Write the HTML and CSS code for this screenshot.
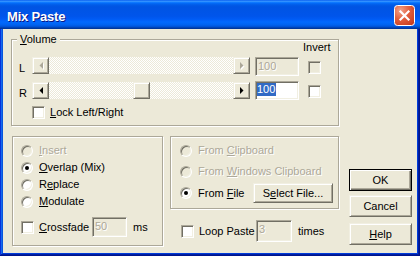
FILE: index.html
```html
<!DOCTYPE html>
<html>
<head>
<meta charset="utf-8">
<link rel="stylesheet" href="styles.css">
</head>
<body>
<div class="window">
  <div class="titlebar">
    <span class="title">Mix Paste</span>
    <span class="close">
      <svg width="21" height="21" viewBox="0 0 21 21">
        <defs>
          <radialGradient id="cg" cx="0.3" cy="0.25" r="0.95">
            <stop offset="0" stop-color="#F2A28A"/>
            <stop offset="0.45" stop-color="#E2603F"/>
            <stop offset="1" stop-color="#C2381A"/>
          </radialGradient>
        </defs>
        <rect x="0.5" y="0.5" width="20" height="20" rx="3" fill="url(#cg)" stroke="#fff"/>
        <path d="M6.5 6.5L14.5 14.5M14.5 6.5L6.5 14.5" stroke="#fff" stroke-width="2.2" stroke-linecap="square"/>
      </svg>
    </span>
  </div>
  <div class="client">
    <div class="main">
      <div class="group volume">
        <div class="legend"><u>V</u>olume</div>
        <div class="vol-grid">
          <span class="invert-label">Invert</span>

          <span class="ch-label l">L</span>
          <div class="scroll disabled">
            <span class="arrow"><svg width="5" height="8" viewBox="0 0 5 8"><polygon points="5,1 5,8 1.5,4.5" fill="#fff"/><polygon points="4,0 4,7 0.5,3.5" fill="#ACA899"/></svg></span>
            <span class="track"></span>
            <span class="arrow"><svg width="5" height="8" viewBox="0 0 5 8"><polygon points="1,1 1,8 4.5,4.5" fill="#fff"/><polygon points="0,0 0,7 3.5,3.5" fill="#ACA899"/></svg></span>
          </div>
          <span class="edit disabled">100</span>
          <span class="check disabled"></span>

          <span class="ch-label r">R</span>
          <div class="scroll r">
            <span class="arrow"><svg width="4" height="7" viewBox="0 0 4 7"><polygon points="4,0 4,7 0.5,3.5" fill="#000"/></svg></span>
            <span class="track"><span class="thumb" style="margin-left:84px"></span></span>
            <span class="arrow"><svg width="4" height="7" viewBox="0 0 4 7"><polygon points="0,0 0,7 3.5,3.5" fill="#000"/></svg></span>
          </div>
          <span class="edit"><span class="sel">100</span></span>
          <span class="check"></span>

          <label class="opt lock"><span class="check"></span><span><u>L</u>ock Left/Right</span></label>
        </div>
      </div>

      <div class="lower">
        <div class="group mode">
          <div class="opt disabled"><span class="radio"></span><span><u>I</u>nsert</span></div>
          <div class="opt"><span class="radio on"></span><span><u>O</u>verlap (Mix)</span></div>
          <div class="opt"><span class="radio"></span><span>R<u>e</u>place</span></div>
          <div class="opt"><span class="radio"></span><span><u>M</u>odulate</span></div>
          <div class="opt xfade">
            <span class="check"></span><span class="xfade-text"><u>C</u>rossfade</span>
            <span class="edit disabled small">50</span>
            <span class="unit">ms</span>
          </div>
        </div>

        <div class="mid">
          <div class="group source">
            <div class="opt disabled"><span class="radio"></span><span>From <u>C</u>lipboard</span></div>
            <div class="opt disabled row2"><span class="radio"></span><span>From <u>W</u>indows Clipboard</span></div>
            <div class="opt row3"><span class="radio on"></span><span>From <u>F</u>ile</span>
              <span class="btn select">S<u>e</u>lect File...</span>
            </div>
          </div>
          <div class="opt loop">
            <span class="check"></span><span class="loop-text">Loop Paste</span>
            <span class="edit disabled times">3</span>
            <span class="unit">times</span>
          </div>
        </div>
      </div>
    </div>

    <div class="buttons">
      <span class="btn default">OK</span>
      <span class="btn cancel">Cancel</span>
      <span class="btn help"><u>H</u>elp</span>
    </div>
  </div>
</div>
</body>
</html>
```

FILE: styles.css
```css
* { box-sizing: border-box; }
html, body { margin: 0; padding: 0; }
body {
  width: 420px;
  height: 256px;
  overflow: hidden;
  font-family: "Liberation Sans", Arial, sans-serif;
  font-size: 11px;
  line-height: 13px;
  color: #000;
}
u { text-decoration-thickness: 1px; text-underline-offset: 1px; }

.window {
  width: 420px;
  height: 256px;
  display: flex;
  flex-direction: column;
  background: #0855DD;
  box-shadow: inset -1px -1px #00138C, inset 1px 1px #0831D9, inset -2px -2px #001EA0,
              inset 2px 2px #166AEE, inset -3px -3px #003BDA, inset 3px 3px #0855DD;
}

.titlebar {
  flex: none;
  height: 29px;
  display: flex;
  align-items: flex-start;
  padding: 0 5px 0 7px;
  background: linear-gradient(to bottom, #0058EE 0%, #3A93FF 4%, #288EFF 6%, #127DFF 8%,
    #036FFC 10%, #0262EE 14%, #0057E5 20%, #0054E3 24%, #0055EB 56%, #005BF5 66%,
    #026AFE 76%, #0062EF 86%, #0052D6 92%, #0040AB 96%, #003092 100%);
}
.title {
  flex: 1;
  margin-top: 9px;
  color: #fff;
  font-weight: bold;
  font-size: 13px;
  line-height: 15px;
  letter-spacing: -0.2px;
  text-shadow: 1px 1px #0A1883;
}
.close { margin-top: 5px; width: 21px; height: 21px; display: block; }
.close svg { display: block; }

.client {
  flex: 1;
  margin: 0 3px 3px;
  background: #ECE9D8;
  display: flex;
  padding: 10px 0 0 8px;
}

.main { width: 328px; flex: none; }

.group {
  border: 1px solid #ACA899;
  box-shadow: inset 1px 1px #fff, 1px 1px #fff;
}
.legend {
  width: fit-content;
  margin: -7px 0 0 -2px;
  padding: 0 3px;
  background: #ECE9D8;
}

.volume { height: 87px; padding: 0 7px 6px 7px; }
.vol-grid {
  display: grid;
  grid-template-columns: 13px 218px 49px 22px;
  grid-template-rows: 16px 24px 25px 13px;
  align-items: start;
  margin-top: -5px;
}
.invert-label { grid-column: 4; margin-left: 4px; white-space: nowrap; }
.ch-label.l { margin-top: 5px; }
.ch-label.r { margin-top: 6px; }
.scroll.r { margin-top: 1px; }
.vol-grid .edit { margin-left: 5px; width: 44px; height: 19px; }
.vol-grid > .check { margin-left: 9px; margin-top: 4px; }
.lock { grid-column: 2 / 5; }

.scroll { display: flex; height: 17px; width: 218px; }
.arrow {
  width: 17px;
  height: 17px;
  flex: none;
  display: flex;
  align-items: center;
  justify-content: center;
  background: #ECE9D8;
  border: 1px solid;
  border-color: #F1EFE2 #716F64 #716F64 #F1EFE2;
  box-shadow: inset 1px 1px #fff, inset -1px -1px #ACA899;
}
.arrow svg { display: block; }
.scroll.disabled .arrow svg { margin: 1px 0 0 1px; }
.track {
  flex: 1;
  display: flex;
  background: repeating-conic-gradient(#fff 0 25%, #ECE9D8 0 50%) 0 0 / 2px 2px;
}
.thumb {
  width: 17px;
  height: 17px;
  background: #ECE9D8;
  border: 1px solid;
  border-color: #F1EFE2 #716F64 #716F64 #F1EFE2;
  box-shadow: inset 1px 1px #fff, inset -1px -1px #ACA899;
}

.edit {
  display: block;
  background: #fff;
  border: 1px solid;
  border-color: #ACA899 #fff #fff #ACA899;
  box-shadow: inset 1px 1px #716F64, inset -1px -1px #F1EFE2;
  padding: 1px 1px 0;
  white-space: nowrap;
}
.edit.disabled { background: #ECE9D8; color: #ACA899; text-shadow: 1px 1px #fff; padding-top: 2px; padding-left: 2px; }
.sel { background: #316AC5; color: #fff; padding-right: 1px; display: inline-block; }

.check {
  width: 13px;
  height: 13px;
  flex: none;
  display: block;
  background: #fff;
  border: 1px solid;
  border-color: #ACA899 #fff #fff #ACA899;
  box-shadow: inset 1px 1px #716F64, inset -1px -1px #F1EFE2;
}
.check.disabled { background: #ECE9D8; }

.radio {
  width: 12px;
  height: 12px;
  flex: none;
  border-radius: 50%;
  background: #fff;
  border: 1px solid;
  border-color: #ACA899 #fff #fff #ACA899;
  box-shadow: inset 1px 1px #716F64, inset -1px -1px #F1EFE2;
  display: flex;
  align-items: center;
  justify-content: center;
}
.radio.on::after {
  content: "";
  width: 4px;
  height: 4px;
  border-radius: 50%;
  background: #000;
}

.opt { display: flex; align-items: center; height: 13px; white-space: nowrap; }
.opt .radio { margin-right: 6px; }
.opt .check { margin-right: 5px; }
.opt.disabled { color: #ACA899; text-shadow: 1px 1px #fff; }
.opt.disabled .radio { background: #ECE9D8; }

.lower { display: flex; margin-top: 10px; }

.mode {
  margin-left: 1px;
  width: 151px;
  height: 110px;
  padding: 7px 0 0 8px;
  display: flex;
  flex-direction: column;
  gap: 4px;
}
.mode .xfade { height: 20px; margin-top: 5px; }
.xfade-text { width: 53px; }
.edit.small { width: 35px; height: 20px; }
.unit { margin-left: 6px; }

.mid { margin-left: 7px; }
.source {
  width: 169px;
  height: 73px;
  padding: 7px 5px 0 9px;
  display: flex;
  flex-direction: column;
}
.source .row2 { margin-top: 8px; }
.source .row3 { margin-top: 5px; height: 20px; }

.btn {
  display: flex;
  align-items: center;
  justify-content: center;
  background: #ECE9D8;
  border: 1px solid;
  border-color: #F1EFE2 #716F64 #716F64 #F1EFE2;
  box-shadow: inset 1px 1px #fff, inset -1px -1px #ACA899;
  white-space: nowrap;
}
.btn.select { margin-left: auto; width: 80px; height: 20px; }

.loop { height: 22px; margin-top: 11px; padding-left: 11px; }
.loop-text { width: 57px; }
.edit.times { width: 36px; height: 22px; }

.buttons {
  margin-left: 10px;
  padding-top: 130px;
  display: flex;
  flex-direction: column;
}
.buttons .btn { width: 63px; height: 22px; }
.btn.default {
  border: 1px solid #000;
  box-shadow: inset 1px 1px #fff, inset -1px -1px #716F64, inset -2px -2px #ACA899;
}
.btn.cancel { margin-top: 4px; }
.btn.help { margin-top: 6px; }
```
